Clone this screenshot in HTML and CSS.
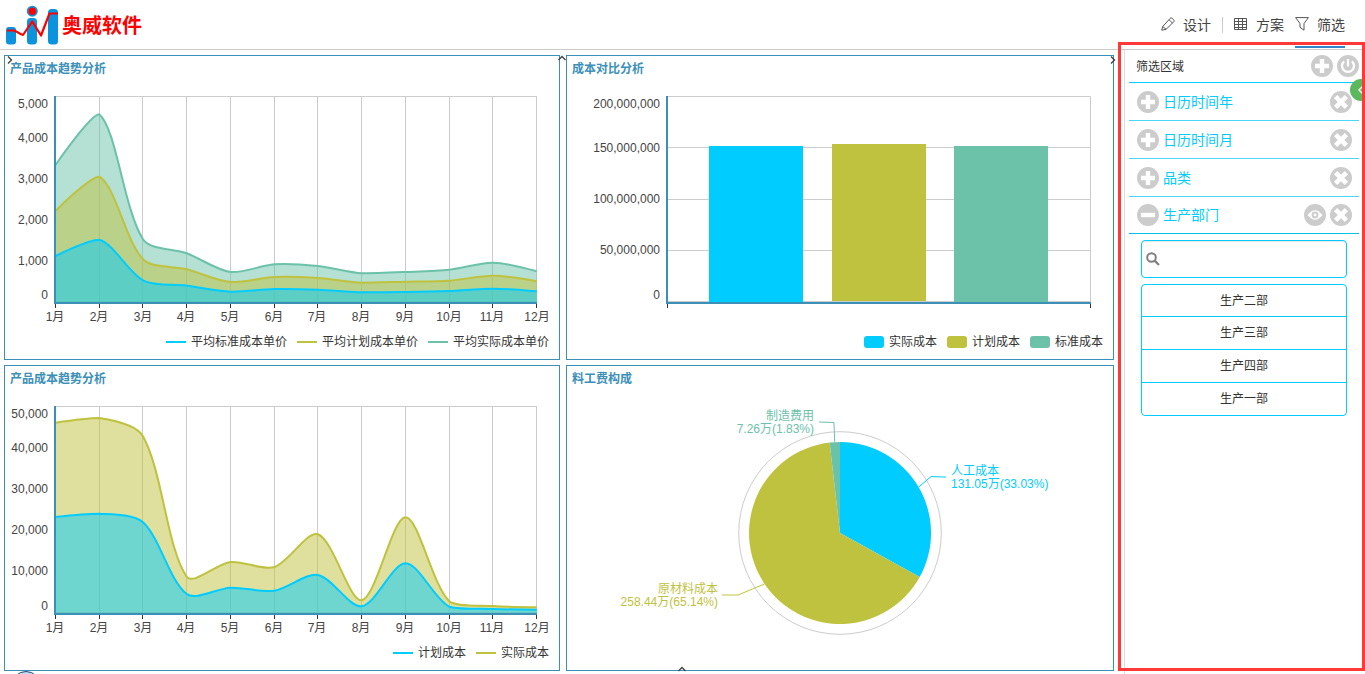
FILE: index.html
```html
<!DOCTYPE html>
<html lang="zh-CN">
<head>
<meta charset="utf-8">
<title>奥威软件</title>
<link rel="stylesheet" href="styles.css">
</head>
<body>
<svg class="sprite" aria-hidden="true">
  <symbol id="i-plus" viewBox="0 0 22 22"><circle cx="11" cy="11" r="11" fill="#ccc"/><path d="M11 4v14M4 11h14" stroke="#fff" stroke-width="4.4"/></symbol>
  <symbol id="i-minus" viewBox="0 0 22 22"><circle cx="11" cy="11" r="11" fill="#ccc"/><path d="M4 11h14" stroke="#fff" stroke-width="4.4"/></symbol>
  <symbol id="i-close" viewBox="0 0 22 22"><circle cx="11" cy="11" r="11" fill="#ccc"/><path d="M5.600 5.600l10.800 10.800M16.400 5.600L5.600 16.400" stroke="#fff" stroke-width="4.600"/></symbol>
  <symbol id="i-power" viewBox="0 0 22 22"><circle cx="11" cy="11" r="11" fill="#ccc"/><path d="M7.200 6.300a6 6 0 1 0 7.600 0M11 4v7.500" fill="none" stroke="#fff" stroke-width="2.300"/></symbol>
  <symbol id="i-eye" viewBox="0 0 22 22"><circle cx="11" cy="11" r="11" fill="#ccc"/><path d="M3.500 11Q11 1.500 18.500 11Q11 20.500 3.500 11Z" fill="#fff"/><circle cx="11" cy="11" r="3.400" fill="#ccc"/><circle cx="11" cy="11" r="1.400" fill="#fff"/></symbol>
</svg>

<div class="page">
  <header class="topbar">
    <div class="brand">
      <svg width="52" height="40" viewBox="6 4 52 40" aria-hidden="true">
        <rect x="6" y="26" width="10" height="17.500" rx="3" fill="#0b93de"/>
        <rect x="27" y="17" width="10" height="26.500" rx="3.500" fill="#0b93de"/>
        <rect x="48" y="8" width="10" height="35.500" rx="3.500" fill="#0b93de"/>
        <circle cx="32.300" cy="10.200" r="4.600" fill="#f00" stroke="#0b93de" stroke-width="1.800"/>
        <path d="M7 29.500h6.500c4 .5 6 4 9.500 4.500L32.300 20.500 41 34.500 49.500 12.500H58" fill="none" stroke="#f00" stroke-width="2.200" stroke-linejoin="round"/>
      </svg>
      <span class="brand-name">奥威软件</span>
    </div>
    <nav class="menu">
      <button class="menu-item" type="button">
        <svg width="14" height="14" viewBox="0 0 14 14" class="line-icon"><path d="M.8 13.200L1.600 9.600 9 1.500Q9.800.4 10.900 1.200L12.700 2.800Q13.600 3.700 12.800 4.700L5.200 12.300ZM8 2.700l3.600 3.500M1.800 9.600l3.400 2.700"/></svg>
        设计
      </button>
      <span class="divider"></span>
      <button class="menu-item" type="button">
        <svg width="14" height="14" viewBox="0 0 14 14" class="line-icon"><path d="M.5 1.500h12v11H.5ZM.5 4.500h12M.5 7.500h12M.5 10.500h12M4.500 1.500v11M8.500 1.500v11"/></svg>
        方案
      </button>
      <button class="menu-item is-active" type="button">
        <svg width="14" height="14" viewBox="0 0 14 14" class="line-icon"><path d="M.6.6H13.400L9 6.600V13.200L5 10.300V6.600Z"/></svg>
        筛选
      </button>
    </nav>
  </header>

  <div class="content">
    <main class="dashboard">
      <section class="panel">
        <h2>产品成本趋势分析</h2>
        <svg class="chart" viewBox="5 80 554 252" data-base="302">
          <path class="grid" d="M55 96.500H536.500M99.500 96V302M142.500 96V302M186.500 96V302M230.500 96V302M274.500 96V302M317.500 96V302M361.500 96V302M405.500 96V302M449.500 96V302M492.500 96V302M536.500 96V302M55 301.500H537"/>
          <g class="teal" data-values="165 114.300 239.300 253.300 272 264.300 266 273.300 272 269.700 262.700 271.300"></g>
          <g class="olive" data-values="211 176.700 259.300 269.300 282 277 278 282.700 281.700 280.700 275.700 281.300"></g>
          <g class="cyan" data-values="256 239.700 280.300 285.700 291.700 289 289.700 292.300 292 291 288.700 291.300"></g>
          <path class="axis" d="M55 96V304M54 303H537"/>
          <path class="tick" d="M55.500 304v4M99.500 304v4M142.500 304v4M186.500 304v4M230.500 304v4M274.500 304v4M317.500 304v4M361.500 304v4M405.500 304v4M449.500 304v4M492.500 304v4M536.500 304v4"/>
          <g class="label end"><text x="48" y="108">5,000</text><text x="48" y="142">4,000</text><text x="48" y="183">3,000</text><text x="48" y="224">2,000</text><text x="48" y="265">1,000</text><text x="48" y="299">0</text></g>
          <g class="label mid"><text x="55" y="321">1月</text><text x="99" y="321">2月</text><text x="143" y="321">3月</text><text x="186" y="321">4月</text><text x="230" y="321">5月</text><text x="274" y="321">6月</text><text x="317" y="321">7月</text><text x="361" y="321">8月</text><text x="405" y="321">9月</text><text x="449" y="321">10月</text><text x="492" y="321">11月</text><text x="537" y="321">12月</text></g>
        </svg>
        <ul class="legend">
          <li><i class="dash bg-cyan"></i>平均标准成本单价</li>
          <li><i class="dash bg-olive"></i>平均计划成本单价</li>
          <li><i class="dash bg-teal"></i>平均实际成本单价</li>
        </ul>
      </section>

      <section class="panel">
        <h2>成本对比分析</h2>
        <svg class="chart" viewBox="567 80 546 252">
          <path class="grid" d="M667 96.500H1090.500V302M667 147.500H1090M667 199.500H1090M667 250.500H1090M667 301.500H1090"/>
          <rect x="709" y="146" width="94" height="156" fill="#00ccff"/>
          <rect x="832" y="144" width="94" height="157" fill="#bfc23e"/>
          <rect x="954" y="146" width="94" height="156" fill="#6bc2a9"/>
          <path class="axis" d="M667 96V304M666 303H1091"/>
          <path class="tick" d="M667.500 304v4M1090.500 304v4"/>
          <g class="label end"><text x="660" y="108">200,000,000</text><text x="660" y="152">150,000,000</text><text x="660" y="203">100,000,000</text><text x="660" y="254">50,000,000</text><text x="660" y="299">0</text></g>
        </svg>
        <ul class="legend">
          <li><i class="block bg-cyan"></i>实际成本</li>
          <li><i class="block bg-olive"></i>计划成本</li>
          <li><i class="block bg-teal"></i>标准成本</li>
        </ul>
      </section>

      <section class="panel">
        <h2>产品成本趋势分析</h2>
        <svg class="chart" viewBox="5 390 554 253" data-base="613">
          <path class="grid" d="M55 406.500H536.500M99.500 406V613M142.500 406V613M186.500 406V613M230.500 406V613M274.500 406V613M317.500 406V613M361.500 406V613M405.500 406V613M449.500 406V613M492.500 406V613M536.500 406V613M55 612.500H537"/>
          <g class="olive" data-values="422.700 418 436.300 576.700 562 567 534.300 600.300 517.300 601.300 606 607.300"></g>
          <g class="cyan" data-values="517 513.700 522.300 594 587.700 590.700 575 606.300 563.300 606.700 609 609.700"></g>
          <path class="axis" d="M55 406V615M54 614H537"/>
          <path class="tick" d="M55.500 615v4M99.500 615v4M142.500 615v4M186.500 615v4M230.500 615v4M274.500 615v4M317.500 615v4M361.500 615v4M405.500 615v4M449.500 615v4M492.500 615v4M536.500 615v4"/>
          <g class="label end"><text x="48" y="418">50,000</text><text x="48" y="452">40,000</text><text x="48" y="493">30,000</text><text x="48" y="534">20,000</text><text x="48" y="575">10,000</text><text x="48" y="610">0</text></g>
          <g class="label mid"><text x="55" y="632">1月</text><text x="99" y="632">2月</text><text x="143" y="632">3月</text><text x="186" y="632">4月</text><text x="230" y="632">5月</text><text x="274" y="632">6月</text><text x="317" y="632">7月</text><text x="361" y="632">8月</text><text x="405" y="632">9月</text><text x="449" y="632">10月</text><text x="492" y="632">11月</text><text x="537" y="632">12月</text></g>
        </svg>
        <ul class="legend">
          <li><i class="dash bg-cyan"></i>计划成本</li>
          <li><i class="dash bg-olive"></i>实际成本</li>
        </ul>
      </section>

      <section class="panel">
        <h2>料工费构成</h2>
        <svg class="chart" viewBox="567 390 546 280">
          <circle cx="840" cy="533" r="101.300" fill="none" stroke="#ccc"/>
          <path d="M840 533V442A91 91 0 0 1 919.700 577Z" fill="#00ccff"/>
          <path d="M840 533L919.700 577A91 91 0 1 1 829.600 442.600Z" fill="#bfc23e"/>
          <path d="M840 533L829.600 442.600A91 91 0 0 1 840 442Z" fill="#6bc2a9"/>
          <g fill="none">
            <path d="M918.700 487L931 476.600 946 477" stroke="#00ccff"/>
            <path d="M764.500 584L738 595H722" stroke="#bfc23e"/>
            <path d="M834.700 442L834 422.500 819 422" stroke="#6bc2a9"/>
          </g>
          <g class="pie-label" fill="#00ccff"><text x="951" y="475">人工成本</text><text x="951" y="488">131.05万(33.03%)</text></g>
          <g class="pie-label end" fill="#bfc23e"><text x="718" y="593">原材料成本</text><text x="718" y="606">258.44万(65.14%)</text></g>
          <g class="pie-label end" fill="#6bc2a9"><text x="814" y="420">制造费用</text><text x="814" y="433">7.26万(1.83%)</text></g>
        </svg>
      </section>

      <svg class="mark mark-nw" width="6" height="8" viewBox="0 0 6 8"><path d="M1 .5L4.500 4 1 7.500"/></svg>
      <svg class="mark mark-n" width="8" height="6" viewBox="0 0 8 6"><path d="M.5 5L4 1.500 7.500 5"/></svg>
      <svg class="mark mark-ne" width="6" height="8" viewBox="0 0 6 8"><path d="M1 .5L4.500 4 1 7.500"/></svg>
      <svg class="mark mark-s" width="8" height="6" viewBox="0 0 8 6"><path d="M.5 5L4 1.500 7.500 5"/></svg>
      <span class="dock"></span>
    </main>

    <aside class="filters">
      <div class="filters-head">
        <span class="filters-title">筛选区域</span>
        <button class="icon-btn" type="button" aria-label="添加"><svg width="22" height="22"><use href="#i-plus"/></svg></button>
        <button class="icon-btn" type="button" aria-label="开关"><svg width="22" height="22"><use href="#i-power"/></svg></button>
      </div>
      <div class="filter-row">
        <button class="icon-btn" type="button" aria-label="展开"><svg width="22" height="22"><use href="#i-plus"/></svg></button>
        <span class="filter-name">日历时间年</span>
        <button class="icon-btn" type="button" aria-label="移除"><svg width="22" height="22"><use href="#i-close"/></svg></button>
      </div>
      <div class="filter-row">
        <button class="icon-btn" type="button" aria-label="展开"><svg width="22" height="22"><use href="#i-plus"/></svg></button>
        <span class="filter-name">日历时间月</span>
        <button class="icon-btn" type="button" aria-label="移除"><svg width="22" height="22"><use href="#i-close"/></svg></button>
      </div>
      <div class="filter-row">
        <button class="icon-btn" type="button" aria-label="展开"><svg width="22" height="22"><use href="#i-plus"/></svg></button>
        <span class="filter-name">品类</span>
        <button class="icon-btn" type="button" aria-label="移除"><svg width="22" height="22"><use href="#i-close"/></svg></button>
      </div>
      <div class="filter-row is-open">
        <button class="icon-btn" type="button" aria-label="收起"><svg width="22" height="22"><use href="#i-minus"/></svg></button>
        <span class="filter-name">生产部门</span>
        <button class="icon-btn" type="button" aria-label="显示"><svg width="22" height="22"><use href="#i-eye"/></svg></button>
        <button class="icon-btn" type="button" aria-label="移除"><svg width="22" height="22"><use href="#i-close"/></svg></button>
      </div>
      <div class="filter-body">
        <label class="search">
          <svg width="14" height="14" viewBox="0 0 14 14" aria-hidden="true"><circle cx="5.500" cy="5.500" r="4.300" fill="none" stroke="#808080" stroke-width="2"/><path d="M8.600 8.600L13 13" stroke="#808080" stroke-width="2.200"/></svg>
          <input type="text" aria-label="搜索生产部门">
        </label>
        <div class="options">
          <button type="button">生产二部</button>
          <button type="button">生产三部</button>
          <button type="button">生产四部</button>
          <button type="button">生产一部</button>
        </div>
      </div>
      <button class="drawer-toggle" type="button" aria-label="收起面板"><svg width="22" height="22" viewBox="0 0 22 22"><path d="M12.500 7.500L9 11l3.500 3.500" fill="none" stroke="#fff" stroke-width="1.400"/></svg></button>
      <div class="highlight"></div>
    </aside>
  </div>
</div>
<script src="charts.js"></script>
</body>
</html>
```

FILE: styles.css
```css
* { box-sizing: border-box; }

body {
  margin: 0;
  background: #fff;
  color: #333;
  font-family: "Liberation Sans", "Noto Sans CJK SC", sans-serif;
  font-size: 12px;
}

button {
  margin: 0;
  padding: 0;
  border: 0;
  background: none;
  color: inherit;
  font: inherit;
  cursor: pointer;
}

.sprite { display: none; }

.page {
  display: flex;
  flex-direction: column;
  min-height: 100vh;
  overflow: hidden;
}

/* Header */
.topbar {
  display: flex;
  justify-content: space-between;
  height: 50px;
  padding: 0 20px 0 6px;
  border-bottom: 1px solid #ccc;
}
.brand { display: flex; align-items: center; gap: 4px; }
.brand-name { color: #f00; font-size: 20px; font-weight: bold; }
.menu { display: flex; align-items: center; gap: 11px; color: #444; }
.menu-item {
  display: flex;
  align-items: center;
  gap: 8px;
  height: 47px;
  font-size: 14px;
  border-bottom: 2px solid transparent;
}
.is-active { border-bottom-color: #2f86cc; }
.divider { width: 1px; height: 16px; background: #ccc; }
.line-icon { fill: none; stroke: #555; stroke-width: 1; }

/* Dashboard */
.content { display: flex; flex: 1; }
.dashboard {
  position: relative;
  flex: 1;
  display: grid;
  grid-template-columns: 556fr 548fr;
  align-content: start;
  gap: 5px 6px;
  padding: 5px 10px 3px 4px;
}
.panel { border: 1px solid #3c90b8; }
.panel h2 {
  margin: 0;
  padding: 2px 0 0 5px;
  color: #3c90b8;
  font-size: 12px;
  line-height: 22px;
}
.chart { display: block; width: 100%; }
.grid { fill: none; stroke: #ccc; }
.axis { fill: none; stroke: #3c90b8; stroke-width: 2; }
.tick { stroke: #333; }
.label { fill: #444; font-size: 12px; }
.pie-label { font-size: 12px; }
.end { text-anchor: end; }
.mid { text-anchor: middle; }

.curve { fill: none; stroke: currentColor; stroke-width: 2; }
.area { fill: currentColor; fill-opacity: 0.5; }
.cyan { color: #00ccff; }
.olive { color: #bfc23e; }
.teal { color: #6bc2a9; }

.legend {
  display: flex;
  justify-content: flex-end;
  gap: 10px;
  margin: 0;
  padding: 0 10px 7px;
  list-style: none;
  line-height: 20px;
}
.legend li { display: flex; align-items: center; gap: 5px; }
.dash { width: 20px; height: 2px; }
.block { width: 20px; height: 12px; border-radius: 3px; }
.bg-cyan { background: #00ccff; }
.bg-olive { background: #bfc23e; }
.bg-teal { background: #6bc2a9; }

.mark { position: absolute; fill: none; stroke: #444; stroke-width: 1.4px; }
.mark-nw { left: 7px; top: 6px; }
.mark-n { left: 558px; top: 5px; }
.mark-ne { right: 8px; top: 6px; }
.mark-s { left: 678px; bottom: 2px; }
.dock {
  position: absolute;
  left: 11px;
  bottom: -27px;
  width: 30px;
  height: 30px;
  border: 1px solid #1c4a7c;
  border-radius: 50%;
  background: #c8d8ee;
}

/* Filter drawer */
.filters {
  position: relative;
  width: 241px;
  padding: 0 6px 0 4px;
  border-left: 1px solid #ddd;
}
.filters-head {
  display: flex;
  align-items: center;
  gap: 4px;
  height: 33px;
  padding-left: 7px;
  border-bottom: 1px solid #00ccff;
}
.filters-title { flex: 1; padding-bottom: 2px; }
.icon-btn { display: block; width: 22px; height: 22px; }
.icon-btn svg { display: block; }
.filter-row {
  display: flex;
  align-items: center;
  gap: 4px;
  height: 38px;
  padding: 0 7px 0 8px;
  border-bottom: 1px solid #4cd6f7;
  color: #00ccff;
  font-size: 14px;
}
.filter-name { flex: 1; padding-bottom: 2px; }
.is-open { height: 37px; border-bottom-color: #00bfe8; }
.filter-body { padding: 6px 12px; }
.search {
  display: flex;
  align-items: center;
  gap: 6px;
  height: 38px;
  padding: 0 4px;
  border: 1px solid #00ccff;
  border-radius: 4px;
  box-shadow: inset 0 1px 1px rgba(0, 0, 0, 0.1);
}
.search input {
  flex: 1;
  min-width: 0;
  height: 30px;
  border: 0;
  outline: 0;
  background: none;
  font: inherit;
}
.options {
  display: flex;
  flex-direction: column;
  margin-top: 6px;
  border: 1px solid #00ccff;
  border-radius: 4px;
}
.options button {
  height: 33px;
  padding-bottom: 3px;
  border-bottom: 1px solid #00ccff;
}
.options button:first-child { height: 32px; }
.options button:last-child { height: 32px; border-bottom: 0; }

.drawer-toggle {
  position: absolute;
  top: 29px;
  right: -7px;
  width: 22px;
  height: 22px;
  border-radius: 50%;
  background: #5cb85c;
}
.drawer-toggle svg { display: block; }
.highlight {
  position: absolute;
  top: -8px;
  right: 0;
  bottom: 3px;
  left: -7px;
  border: 3px solid #ff3838;
  pointer-events: none;
}
```

FILE: charts.js
```js
// Smoothed area charts: each series group lists its y values, one per month.
(function () {
  var NS = 'http://www.w3.org/2000/svg';
  var LEFT = 55.5, STEP = 43.75, SMOOTH = 0.3;

  function curve(pts, minY, maxY) {
    function clamp(y) { return Math.max(minY, Math.min(maxY, y)); }
    function dist(a, b) { return Math.hypot(a[0] - b[0], a[1] - b[1]); }
    var ctrl = pts.map(function (p, i) {
      var a = pts[i - 1], b = pts[i + 1];
      if (!a || !b) return [p, p];
      var vx = (b[0] - a[0]) * SMOOTH, vy = (b[1] - a[1]) * SMOOTH;
      var d0 = dist(p, a), d1 = dist(p, b), s = d0 + d1;
      return [
        [p[0] - vx * d0 / s, clamp(p[1] - vy * d0 / s)],
        [p[0] + vx * d1 / s, clamp(p[1] + vy * d1 / s)]
      ];
    });
    var d = 'M' + pts[0];
    for (var i = 1; i < pts.length; i++) {
      d += 'C' + ctrl[i - 1][1] + ' ' + ctrl[i][0] + ' ' + pts[i];
    }
    return d;
  }

  function add(group, cls, d) {
    var path = document.createElementNS(NS, 'path');
    path.setAttribute('class', cls);
    path.setAttribute('d', d);
    group.appendChild(path);
  }

  document.querySelectorAll('[data-values]').forEach(function (group) {
    var base = +group.ownerSVGElement.dataset.base;
    var ys = group.dataset.values.split(' ').map(Number);
    var pts = ys.map(function (y, i) { return [LEFT + i * STEP, y]; });
    var line = curve(pts, Math.min.apply(null, ys), Math.max.apply(null, ys));
    add(group, 'area', line + 'V' + base + 'H' + LEFT + 'Z');
    add(group, 'curve', line);
  });
})();
```
